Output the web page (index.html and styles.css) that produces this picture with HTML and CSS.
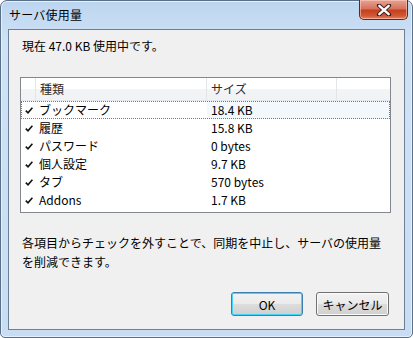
FILE: index.html
```html
<!DOCTYPE html>
<html lang="ja">
<head>
<meta charset="utf-8">
<link rel="stylesheet" href="styles.css">
</head>
<body>
<div class="window">
  <div class="titlebar">
    <span class="title">サーバ使用量</span>
    <div class="close">
      <svg width="16" height="12" viewBox="0 0 16 12"><path d="M3 1.5 L13 10.5 M13 1.5 L3 10.5" stroke="#3a1a1a" stroke-width="4.2" stroke-linecap="round"/><path d="M3.3 1.8 L12.7 10.2 M12.7 1.8 L3.3 10.2" stroke="#fff" stroke-width="2.4" stroke-linecap="round"/></svg>
    </div>
  </div>
  <div class="client">
    <p class="summary">現在 47.0 KB 使用中です。</p>
    <div class="list">
      <div class="head">
        <div class="hc chk"></div>
        <div class="hc name">種類</div>
        <div class="hc size">サイズ</div>
        <div class="hc rest"></div>
      </div>
      <div class="row focus"><span class="ck"><svg width="8" height="7" viewBox="0 0 8 7"><path d="M0.8 3.6 L3 5.8 L7.4 0.8" fill="none" stroke="#111" stroke-width="1.6"/></svg></span><span class="n">ブックマーク</span><span class="s">18.4 KB</span></div>
      <div class="row"><span class="ck"><svg width="8" height="7" viewBox="0 0 8 7"><path d="M0.8 3.6 L3 5.8 L7.4 0.8" fill="none" stroke="#111" stroke-width="1.6"/></svg></span><span class="n">履歴</span><span class="s">15.8 KB</span></div>
      <div class="row"><span class="ck"><svg width="8" height="7" viewBox="0 0 8 7"><path d="M0.8 3.6 L3 5.8 L7.4 0.8" fill="none" stroke="#111" stroke-width="1.6"/></svg></span><span class="n">パスワード</span><span class="s">0 bytes</span></div>
      <div class="row"><span class="ck"><svg width="8" height="7" viewBox="0 0 8 7"><path d="M0.8 3.6 L3 5.8 L7.4 0.8" fill="none" stroke="#111" stroke-width="1.6"/></svg></span><span class="n">個人設定</span><span class="s">9.7 KB</span></div>
      <div class="row"><span class="ck"><svg width="8" height="7" viewBox="0 0 8 7"><path d="M0.8 3.6 L3 5.8 L7.4 0.8" fill="none" stroke="#111" stroke-width="1.6"/></svg></span><span class="n">タブ</span><span class="s">570 bytes</span></div>
      <div class="row"><span class="ck"><svg width="8" height="7" viewBox="0 0 8 7"><path d="M0.8 3.6 L3 5.8 L7.4 0.8" fill="none" stroke="#111" stroke-width="1.6"/></svg></span><span class="n">Addons</span><span class="s">1.7 KB</span></div>
    </div>
    <p class="desc">各項目からチェックを外すことで、同期を中止し、サーバの使用量<br>を削減できます。</p>
    <div class="buttons">
      <button class="btn default">OK</button>
      <button class="btn">キャンセル</button>
    </div>
  </div>
</div>
</body>
</html>
```

FILE: styles.css
```css
* { box-sizing: border-box; }
html, body { margin: 0; padding: 0; background: #fff; }
body {
  font-family: "Noto Sans CJK JP", "Noto Sans", sans-serif;
  font-size: 12px;
  color: #000;
}
.window {
  width: 413px;
  height: 338px;
  border: 1px solid #5a6f88;
  border-radius: 7px 7px 5px 5px;
  background: linear-gradient(180deg, #bcd5ef 0px, #cfe2f6 40px, #c8ddf3 100%);
  box-shadow: inset 0 0 0 1px #e6f0fb;
  padding: 0 7px 7px 7px;
  display: flex;
  flex-direction: column;
  position: relative;
}
.titlebar {
  height: 28px;
  display: flex;
  align-items: center;
}
.title {
  padding-left: 1px;
  margin-top: -1px;
  font-size: 12px;
  color: #000;
  letter-spacing: 0.2px;
}
.close {
  position: absolute;
  top: -1px;
  right: 4px;
  width: 49px;
  height: 20px;
  border: 1px solid #5b2a22;
  border-top: none;
  border-radius: 0 0 5px 5px;
  background: linear-gradient(180deg, #e8a493 0%, #d7735c 45%, #c4401f 55%, #d25a37 85%, #e98b6a 100%);
  box-shadow: inset 0 0 0 1px rgba(255,210,200,0.55);
  display: flex;
  align-items: center;
  justify-content: center;
}
.client {
  flex: 1;
  background: #f0f0f0;
  border: 1px solid #6d7f95;
  padding: 0 14px 0 11px;
  display: flex;
  flex-direction: column;
}
.summary {
  margin: 7px 0 0 2px;
  line-height: 18px;
}
.list {
  margin-top: 22px;
  width: 371px;
  height: 136px;
  background: #fff;
  border: 1px solid #828790;
}
.head {
  display: flex;
  height: 23px;
  background: linear-gradient(180deg, #ffffff 0%, #ffffff 50%, #f3f4f6 51%, #f1f2f4 100%);
  border-bottom: 1px solid #e3e6ea;
}
.hc {
  height: 22px;
  line-height: 21px;
  color: #2b2b2b;
  padding-left: 4px;
  border-right: 1px solid #e3e5e9;
}
.hc.chk { width: 15px; padding: 0; }
.hc.name { width: 171px; }
.hc.size { width: 130px; }
.hc.rest { flex: 1; border-right: none; }
.row {
  display: flex;
  align-items: center;
  height: 18px;
  line-height: 18px;
}
.row.focus {
  outline: 1px dotted #3a8cc0;
  outline-offset: -1px;
  background: linear-gradient(90deg, #fff 0px, #fff 186px, #f3f8fd 186px);
}
.ck {
  width: 17px;
  padding-left: 4px;
  display: flex;
  align-items: center;
}
.n { width: 172px; padding-left: 1px; }
.s { padding-left: 1px; }
.desc {
  margin: 20px 0 0 2px;
  line-height: 19px;
}
.buttons {
  margin-top: 21px;
  display: flex;
  justify-content: flex-end;
  gap: 13px;
  padding-right: 1px;
}
.btn {
  font-family: "Noto Sans CJK JP", "Noto Sans", sans-serif;
  font-size: 12px;
  width: 73px;
  height: 24px;
  border: 1px solid #707070;
  border-radius: 3px;
  background: linear-gradient(180deg, #f2f2f2 0%, #ebebeb 49%, #dddddd 50%, #cfcfcf 100%);
  box-shadow: inset 0 0 0 1px #fbfbfb;
  color: #000;
  padding: 0;
}
.btn.default {
  border-color: #3c7fb1;
  box-shadow: inset 0 0 0 1px #48d4fa;
  width: 72px;
}
```
